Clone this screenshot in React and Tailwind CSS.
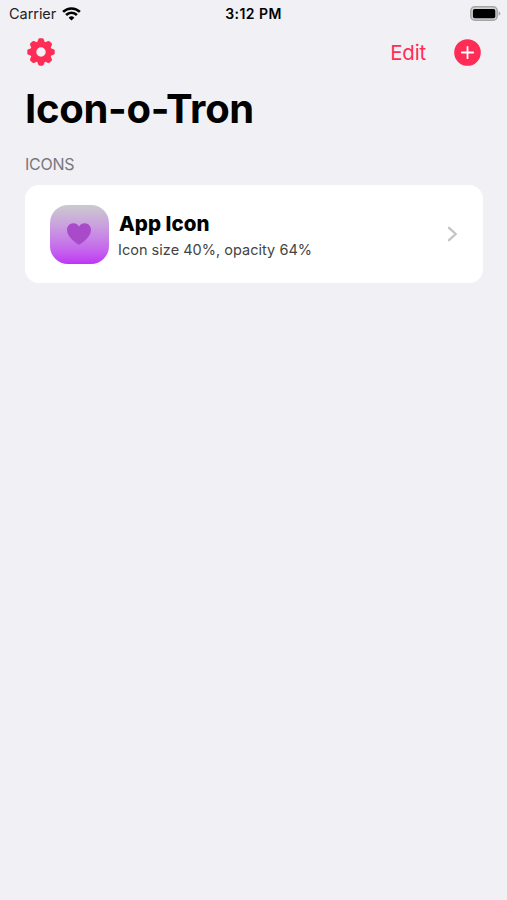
const TEETH = [0, 45, 90, 135, 180, 225, 270, 315];

function Gear() {
  return (
    <svg className="size-7" viewBox="-14 -14 28 28" fill="#ff2d55">
      <circle r="7.7" fill="none" stroke="#ff2d55" strokeWidth="6" />
      {TEETH.map((a) => (
        <path key={a} transform={`rotate(${a})`} d="M-4 -9 L-2.8 -12.6 Q-2.4 -13.7 -1.3 -13.7 H1.3 Q2.4 -13.7 2.8 -12.6 L4 -9 Z" />
      ))}
    </svg>
  );
}

function Wifi() {
  return (
    <svg className="h-[14px] w-[19px]" viewBox="0 0 19 14" fill="none" stroke="#000" strokeWidth="2.6">
      <path d="M1.1 4.9 A12 12 0 0 1 17.9 4.9" />
      <path d="M4.1 8 A7.7 7.7 0 0 1 14.9 8" />
      <path d="M9.5 13.6 L6.6 10.7 A4.1 4.1 0 0 1 12.4 10.7 Z" fill="#000" stroke="none" />
    </svg>
  );
}

function Battery() {
  return (
    <svg className="h-[15px] w-[31px]" viewBox="0 0 31 15">
      <rect x="0.8" y="0.8" width="26.4" height="13.4" rx="4" fill="#d2d2d4" stroke="#a5a5a8" strokeWidth="1.5" />
      <rect x="2.9" y="2.9" width="22.4" height="9.4" rx="1.8" fill="#000" />
      <path d="M28.6 5.2 Q30.4 6 30.4 7.5 T28.6 9.8 Z" fill="#a5a5a8" />
    </svg>
  );
}

export default function App() {
  return (
    <div className="h-[900px] w-[507px] overflow-hidden bg-[#f1f0f5] font-['Inter','Liberation_Sans',sans-serif] text-black">
      <div className="grid h-7 grid-cols-3 items-center pr-[6px] pl-[9px]">
        <div className="flex items-center gap-[5.5px]">
          <span className="text-[14.5px] leading-7 tracking-[-0.05px] text-[#222]">Carrier</span>
          <Wifi />
        </div>
        <div className="pr-[3px] text-center text-[14px] leading-7 font-semibold tracking-[0.45px]">3:12 PM</div>
        <div className="flex justify-end pb-[2px]"><Battery /></div>
      </div>
      <header className="flex h-12 items-center pr-[26px] pl-[26.5px] text-[#ff2d55]">
        <button aria-label="Settings"><Gear /></button>
        <button className="mr-[28px] ml-auto pt-[2px] text-[20.5px] tracking-[-0.2px]">Edit</button>
        <button aria-label="Add">
          <svg className="size-[27px]" viewBox="0 0 27 27">
            <circle cx="13.5" cy="13.5" r="13.3" fill="#ff2d55" />
            <path d="M13.5 7.8 V19.2 M7.8 13.5 H19.2" stroke="#fff" strokeWidth="1.8" strokeLinecap="round" />
          </svg>
        </button>
      </header>
      <h1 className="mt-[9px] pl-[25px] text-[40px] leading-[48px] font-bold tracking-[-0.3px]">Icon-o-Tron</h1>
      <h2 className="mt-[21px] pl-[25px] text-[16px] leading-5 tracking-[-0.25px] text-[#78777c]">ICONS</h2>
      <div className="mt-[11px] mr-[24.5px] ml-[25px] flex h-[98px] items-center rounded-[14px] bg-white pr-[24.5px] pl-[24.5px]">
        <div className="flex size-[59px] items-center justify-center rounded-[18px] bg-linear-to-b from-[#cccace] to-[#c032f4]">
          <svg className="h-[22px] w-[24px]" viewBox="0 0 24 22">
            <path d="M12 21.8 C10.5 21.3 0 14.5 0 7 C0 3 2.8 0.2 6.3 0.2 C8.9 0.2 11 1.6 12 3.8 C13 1.6 15.1 0.2 17.7 0.2 C21.2 0.2 24 3 24 7 C24 14.5 13.5 21.3 12 21.8 Z" fill="#a94acb" />
          </svg>
        </div>
        <div className="ml-[10.5px] pt-[3px]">
          <div className="text-[20.5px] leading-7 font-extrabold tracking-[0.05px]">App Icon</div>
          <div className="-ml-px text-[14.5px] leading-6 tracking-[0.02px] text-[#444]">Icon size 40%, opacity 64%</div>
        </div>
        <svg className="ml-auto h-[16px] w-[11px]" viewBox="0 0 11 16" fill="none" stroke="#c4c4c7" strokeWidth="2.3" strokeLinecap="round" strokeLinejoin="round">
          <path d="M2 1.8 L8.8 8 L2 14.2" />
        </svg>
      </div>
    </div>
  );
}
